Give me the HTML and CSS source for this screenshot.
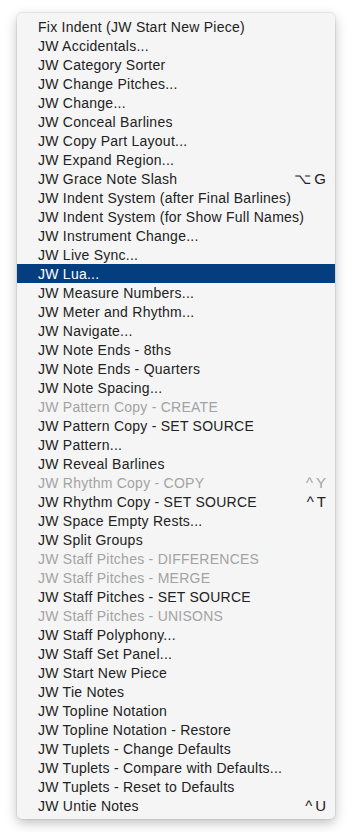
FILE: index.html
```html
<!DOCTYPE html>
<html lang="en">
<head>
    <meta charset="UTF-8">
    <title>JW Plug-ins Menu</title>
    <link rel="stylesheet" href="styles.css">
</head>
<body>
    <div class="menu">
        <div class="menu-item">Fix Indent (JW Start New Piece)</div>
        <div class="menu-item">JW Accidentals...</div>
        <div class="menu-item">JW Category Sorter</div>
        <div class="menu-item">JW Change Pitches...</div>
        <div class="menu-item">JW Change...</div>
        <div class="menu-item">JW Conceal Barlines</div>
        <div class="menu-item">JW Copy Part Layout...</div>
        <div class="menu-item">JW Expand Region...</div>
        <div class="menu-item">JW Grace Note Slash<span class="shortcut">&#x2325;G</span></div>
        <div class="menu-item">JW Indent System (after Final Barlines)</div>
        <div class="menu-item">JW Indent System (for Show Full Names)</div>
        <div class="menu-item">JW Instrument Change...</div>
        <div class="menu-item">JW Live Sync...</div>
        <div class="menu-item selected">JW Lua...</div>
        <div class="menu-item">JW Measure Numbers...</div>
        <div class="menu-item">JW Meter and Rhythm...</div>
        <div class="menu-item">JW Navigate...</div>
        <div class="menu-item">JW Note Ends - 8ths</div>
        <div class="menu-item">JW Note Ends - Quarters</div>
        <div class="menu-item">JW Note Spacing...</div>
        <div class="menu-item disabled">JW Pattern Copy - CREATE</div>
        <div class="menu-item">JW Pattern Copy - SET SOURCE</div>
        <div class="menu-item">JW Pattern...</div>
        <div class="menu-item">JW Reveal Barlines</div>
        <div class="menu-item disabled">JW Rhythm Copy - COPY<span class="shortcut">^Y</span></div>
        <div class="menu-item">JW Rhythm Copy - SET SOURCE<span class="shortcut">^T</span></div>
        <div class="menu-item">JW Space Empty Rests...</div>
        <div class="menu-item">JW Split Groups</div>
        <div class="menu-item disabled">JW Staff Pitches - DIFFERENCES</div>
        <div class="menu-item disabled">JW Staff Pitches - MERGE</div>
        <div class="menu-item">JW Staff Pitches - SET SOURCE</div>
        <div class="menu-item disabled">JW Staff Pitches - UNISONS</div>
        <div class="menu-item">JW Staff Polyphony...</div>
        <div class="menu-item">JW Staff Set Panel...</div>
        <div class="menu-item">JW Start New Piece</div>
        <div class="menu-item">JW Tie Notes</div>
        <div class="menu-item">JW Topline Notation</div>
        <div class="menu-item">JW Topline Notation - Restore</div>
        <div class="menu-item">JW Tuplets - Change Defaults</div>
        <div class="menu-item">JW Tuplets - Compare with Defaults...</div>
        <div class="menu-item">JW Tuplets - Reset to Defaults</div>
        <div class="menu-item">JW Untie Notes<span class="shortcut">^U</span></div>
    </div>
</body>
</html>
```

FILE: styles.css
```css
body {
    margin: 0;
    padding: 13px 17px;
    background: #ffffff;
    font-family: 'Liberation Sans', Arial, sans-serif;
}

.menu {
    width: 318px;
    padding: 4px 0;
    background: #f5f5f5;
    border-radius: 5px;
    box-shadow: 0 0 0 1px rgba(0, 0, 0, 0.06), 0 4px 12px rgba(0, 0, 0, 0.25);
}

.menu-item {
    display: flex;
    justify-content: space-between;
    align-items: center;
    height: 19px;
    padding: 0 9px 0 21px;
    font-size: 14px;
    letter-spacing: 0.25px;
    color: #222222;
}

.menu-item.selected {
    background: #043e7e;
    color: #ffffff;
}

.menu-item.disabled {
    color: #a3a3a3;
}

.shortcut {
    font-size: 15px;
    letter-spacing: 3px;
    margin-right: -3px;
}
```
